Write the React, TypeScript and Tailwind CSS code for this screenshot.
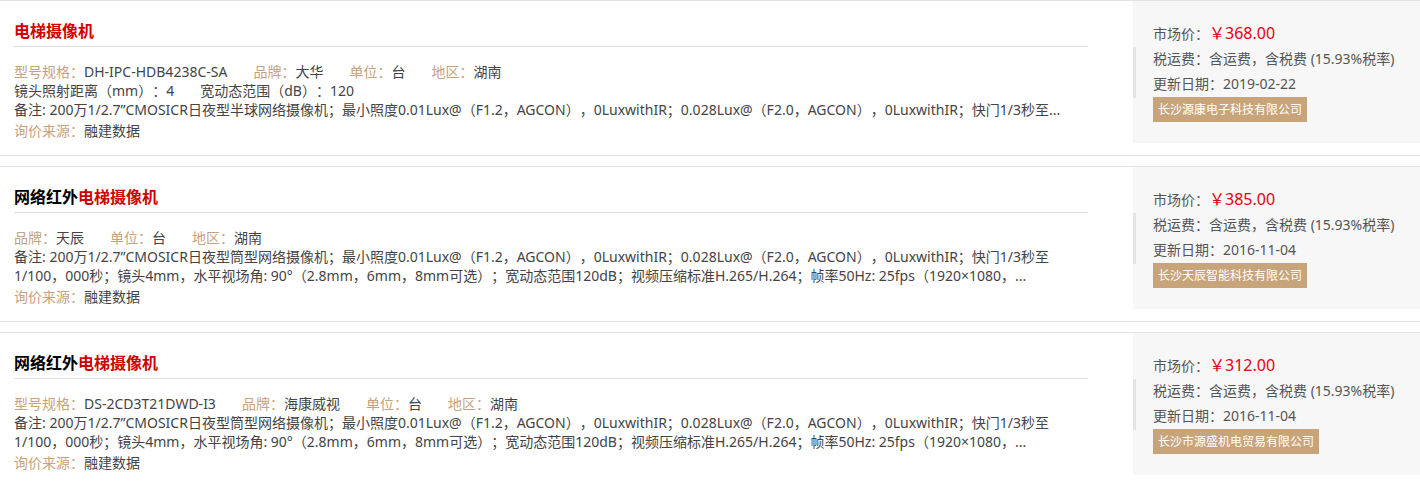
import React from "react";

type Item = {
  prefix?: string;
  title: string;
  specs: { label: string; value: string }[];
  extra?: string[];
  note: string;
  clamp: boolean;
  price: string;
  date: string;
  company: string;
};

const items: Item[] = [
  {
    title: "电梯摄像机",
    specs: [
      { label: "型号规格：", value: "DH-IPC-HDB4238C-SA" },
      { label: "品牌：", value: "大华" },
      { label: "单位：", value: "台" },
      { label: "地区：", value: "湖南" },
    ],
    extra: ["镜头照射距离（mm）：4", "宽动态范围（dB）：120"],
    note:
      "备注: 200万1/2.7”CMOSICR日夜型半球网络摄像机；最小照度0.01Lux@（F1.2，AGCON），0LuxwithIR；0.028Lux@（F2.0，AGCON），0LuxwithIR；快门1/3秒至...",
    clamp: false,
    price: "368.00",
    date: "2019-02-22",
    company: "长沙源康电子科技有限公司",
  },
  {
    prefix: "网络红外",
    title: "电梯摄像机",
    specs: [
      { label: "品牌：", value: "天辰" },
      { label: "单位：", value: "台" },
      { label: "地区：", value: "湖南" },
    ],
    note:
      "备注: 200万1/2.7”CMOSICR日夜型筒型网络摄像机；最小照度0.01Lux@（F1.2，AGCON），0LuxwithIR；0.028Lux@（F2.0，AGCON），0LuxwithIR；快门1/3秒至1/100，000秒；镜头4mm，水平视场角: 90°（2.8mm，6mm，8mm可选）；宽动态范围120dB；视频压缩标准H.265/H.264；帧率50Hz: 25fps（1920×1080，...",
    clamp: true,
    price: "385.00",
    date: "2016-11-04",
    company: "长沙天辰智能科技有限公司",
  },
  {
    prefix: "网络红外",
    title: "电梯摄像机",
    specs: [
      { label: "型号规格：", value: "DS-2CD3T21DWD-I3" },
      { label: "品牌：", value: "海康威视" },
      { label: "单位：", value: "台" },
      { label: "地区：", value: "湖南" },
    ],
    note:
      "备注: 200万1/2.7”CMOSICR日夜型筒型网络摄像机；最小照度0.01Lux@（F1.2，AGCON），0LuxwithIR；0.028Lux@（F2.0，AGCON），0LuxwithIR；快门1/3秒至1/100，000秒；镜头4mm，水平视场角: 90°（2.8mm，6mm，8mm可选）；宽动态范围120dB；视频压缩标准H.265/H.264；帧率50Hz: 25fps（1920×1080，...",
    clamp: true,
    price: "312.00",
    date: "2016-11-04",
    company: "长沙市源盛机电贸易有限公司",
  },
];

function Row({ item }: { item: Item }) {
  return (
    <div className="flex items-start border-y border-[#e3e3e3] bg-white">
      {/* colonne gauche */}
      <div className="flex-1 min-w-0 pl-[14px] pr-[45px] pt-[19px] pb-[15px]">
        <h2 className="border-b border-[#dddddd] pb-[4px] text-[16px] leading-[22px] font-bold">
          {item.prefix && <span className="text-black">{item.prefix}</span>}
          <span className="text-[#d10000]">{item.title}</span>
        </h2>

        <div className="mt-[15px] text-[14px] leading-[19px] text-[#444]">
          <div className="flex">
            {item.specs.map((s, i) => (
              <span key={i} className="mr-[26px]">
                <span className="text-[#c6a27d]">{s.label}</span>
                {s.value}
              </span>
            ))}
          </div>
          {item.extra && (
            <div className="flex">
              {item.extra.map((e, i) => (
                <span key={i} className="mr-[26px]">
                  {e}
                </span>
              ))}
            </div>
          )}
          <p className={item.clamp ? "line-clamp-2" : "truncate"}>{item.note}</p>
          <div className="mt-[2px]">
            <span className="text-[#c6a27d]">询价来源：</span>融建数据
          </div>
        </div>
      </div>

      {/* panneau prix */}
      <div className="flex w-[287px] shrink-0 bg-[#f7f7f7] h-[142px]">
        <div className="self-center h-[51px] w-[3px] bg-[#e4e4e4]" />
        <div className="pl-[17px] pt-[20px] text-[14px] leading-[25px] text-[#555]">
          <div className="h-[25px]">
            市场价：<span className="text-[16px] text-[#e60012]">￥{item.price}</span>
          </div>
          <div>税运费：含运费，含税费 (15.93%税率)</div>
          <div>更新日期：{item.date}</div>
          <div className="inline-block bg-[#c8a47b] px-[5px] text-[12px] leading-[25px] text-white">
            {item.company}
          </div>
        </div>
      </div>
    </div>
  );
}

export default function App() {
  return (
    <div
      className="w-[1420px] bg-white flex flex-col gap-[10px] [text-spacing-trim:space-all]"
      style={{ fontFamily: '"Noto Sans", "Noto Sans CJK SC", sans-serif' }}
    >
      {items.map((item, i) => (
        <Row key={i} item={item} />
      ))}
    </div>
  );
}
